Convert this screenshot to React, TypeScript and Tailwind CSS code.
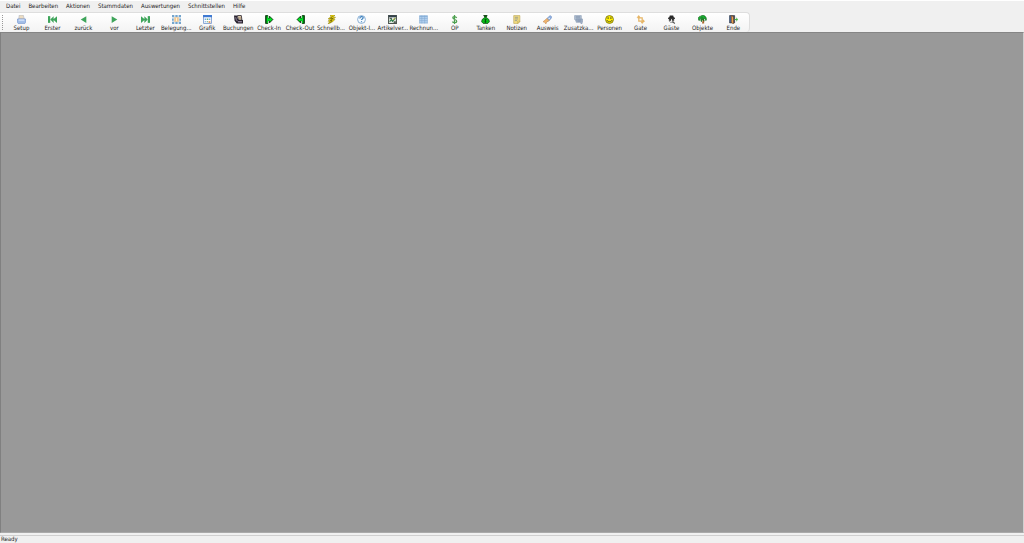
import type { ReactNode } from "react";

interface Tool {
  label: string;
  icon: ReactNode;
}

const MENUS = ["Datei", "Bearbeiten", "Aktionen", "Stammdaten", "Auswertungen", "Schnittstellen", "Hilfe"];

const GREEN = "#3fa55b";

const TOOLS: Tool[] = [
  {
    label: "Setup",
    icon: (
      <>
        <path d="M4 0h7l2 7H3z" fill="#ecdcc2" stroke="#a9b4c4" />
        <path d="M1 7h14l1 6-2 2H2l-2-2z" fill="#a3bfe9" stroke="#6788c4" />
        <path d="M3 9h10" stroke="#e3eeff" strokeWidth="2" />
      </>
    ),
  },
  {
    label: "Erster",
    icon: (
      <>
        <path d="M0 2h4v12H0z" fill={GREEN} />
        <path d="M10 2v12L4 8zM16 2v12L9 8z" fill={GREEN} />
      </>
    ),
  },
  { label: "zurück", icon: <path d="M13 2v12L3 8z" fill={GREEN} /> },
  { label: "vor", icon: <path d="M3 2v12l10-6z" fill={GREEN} /> },
  {
    label: "Letzter",
    icon: (
      <>
        <path d="M12 2h4v12h-4z" fill={GREEN} />
        <path d="M0 2v12l7-6zM6 2v12l6-6z" fill={GREEN} />
      </>
    ),
  },
  {
    label: "Belegung...",
    icon: (
      <>
        <path d="M1 1h14v14H1z" fill="#e4eff8" />
        <path d="M0 0h4v4H0zM6 0h4v4H6zM12 0h4v4h-4zM0 6h3v4H0zM13 6h3v4h-3zM0 12h4v4H0zM6 12h4v4H6zM12 12h4v4h-4z" fill="#75a5cc" />
        <path d="M4 4h8v8H4z" fill="#f3c78f" />
        <path d="M7 5h2v6H7z" fill="#fff0d8" />
      </>
    ),
  },
  {
    label: "Grafik",
    icon: (
      <>
        <path d="M1 1h14v14H1z" fill="#fff" stroke="#6f94cd" strokeWidth="1.5" />
        <path d="M0 0h16v4H0z" fill="#3f7ad2" />
        <path d="M3 6h3v3H3zM10 6h3v3h-3zM3 11h3v2H3z" fill="#79aae2" />
        <path d="M10 11h3v3h-3z" fill="#e48c50" />
        <path d="M7 6h2v3H7zM7 11h2v2H7z" fill="#67b275" />
      </>
    ),
  },
  {
    label: "Buchungen",
    icon: (
      <>
        <path d="M0 1h5l1 4 2 4h8v6H5L1 10z" fill="#2a2430" />
        <path d="M6 1h7l1 8H8z" fill="#f1e4c4" stroke="#2a2430" strokeWidth="1.5" />
        <path d="M8 4h5M9 6h4" stroke="#8a6a50" />
        <path d="M7 12h7" stroke="#a99cb3" strokeWidth="2" />
        <path d="M3 4l1 4 2 3" fill="none" stroke="#a99cb3" strokeWidth="1.5" />
      </>
    ),
  },
  {
    label: "Check-In",
    icon: (
      <>
        <path d="M1 1h4v14H1zM6 6h2V2l6 6-6 6v-4H6z" fill="#063f0a" stroke="#063f0a" strokeWidth="1.5" />
        <path d="M3 2h2v12H3zM5 6h4V4l4 4-4 4v-2H5z" fill="#00e626" />
      </>
    ),
  },
  {
    label: "Check-Out",
    icon: (
      <>
        <path d="M15 1h-4v14h4zM10 6H8V2L2 8l6 6v-4h2z" fill="#063f0a" stroke="#063f0a" strokeWidth="1.5" />
        <path d="M13 2h-2v12h2zM11 6H7V4L3 8l4 4v-2h4z" fill="#00e626" />
      </>
    ),
  },
  {
    label: "Schnellb...",
    icon: (
      <>
        <path d="M6 0h8l-3 4h4l-4 4h3l-4 4-8 4 3-5H2l4-4H2l5-4z" fill="#f3dd12" stroke="#8d7c06" />
        <path d="M10 2L6 6h5l-5 4h3l-4 4" fill="none" stroke="#4b4305" strokeWidth="1.2" />
      </>
    ),
  },
  {
    label: "Objekt-I...",
    icon: (
      <>
        <circle cx="8" cy="8" r="7" fill="#f4faff" stroke="#79a4cc" strokeWidth="1.5" />
        <path d="M5 6c0-4 6-4 6-1 0 2-3 2-3 4M8 11v2" fill="none" stroke="#377cba" strokeWidth="2" />
      </>
    ),
  },
  {
    label: "Artikelver...",
    icon: (
      <>
        <path d="M1 1h14v14H1z" fill="#e0e8e2" stroke="#4a524d" strokeWidth="1.8" />
        <path d="M1 1h14v3H1z" fill="#34414c" />
        <path d="M3 12l3-4 2 3 5-6" fill="none" stroke="#287d46" strokeWidth="2" />
        <path d="M3 5h4v2H3zM10 11h4v3h-4z" fill="#555f58" />
        <path d="M9 9l4-4" stroke="#e1b63c" strokeWidth="1.5" />
      </>
    ),
  },
  {
    label: "Rechnun...",
    icon: (
      <>
        <path d="M1 1h14v14H1z" fill="#b3d1ef" />
        <path d="M1 1h14v2H1z" fill="#7ba6d3" />
        <path d="M1 6h14M1 10h14M1 14h14M1 1v14M5 1v14M10 1v14M15 1v14" stroke="#83aad2" />
      </>
    ),
  },
  {
    label: "OP",
    icon: <path d="M12 5C10 2 5 2 5 5c0 4 7 2 7 6 0 3-5 3-8 1M8 0v16" fill="none" stroke="#4da04f" strokeWidth="2.2" />,
  },
  {
    label: "Tanken",
    icon: (
      <>
        <path d="M5 1h6L9 4l5 4 1 4-3 3H4l-3-3 1-4 5-4z" fill="#08bd18" stroke="#063d0a" strokeWidth="1.2" />
        <path d="M4 0h7L9 4H7z" fill="#1b4c1b" />
        <path d="M10 8c-3-2-4 1-2 2s1 3-2 2M8 7v7" fill="none" stroke="#073c0a" strokeWidth="1.2" />
      </>
    ),
  },
  {
    label: "Notizen",
    icon: (
      <>
        <path d="M3 1h11v11l-3 3H3z" fill="#f2dc80" stroke="#b7a252" />
        <path d="M5 4h6M5 7h6M5 10h4" stroke="#7f8d92" strokeWidth="1.3" />
        <path d="M14 11h-4v4z" fill="#fff3b0" stroke="#b59d46" />
      </>
    ),
  },
  {
    label: "Ausweis",
    icon: (
      <>
        <path d="M8 5l5-4 3 3-5 6-4 1z" fill="#8fb0e2" stroke="#6785b6" />
        <path d="M0 12l7-6 4 4-4 2-2 4-2-3z" fill="#efb36c" stroke="#c48d58" />
        <path d="M10 5l2 2" stroke="#e7f3ff" strokeWidth="2" />
      </>
    ),
  },
  {
    label: "Zusatzka...",
    icon: (
      <>
        <path d="M1 1h12v7H6l-3 3V8H1z" fill="#b4c3d6" stroke="#8799b3" />
        <path d="M4 7h11v6h-1v3l-4-3H4z" fill="#a4b4cb" stroke="#7c8eaa" />
        <path d="M3 3h8M3 5h8M6 9h7M6 11h7" stroke="#7486a1" />
      </>
    ),
  },
  {
    label: "Personen",
    icon: (
      <>
        <circle cx="8" cy="8" r="7" fill="#fff000" stroke="#77710b" strokeWidth="1.5" />
        <path d="M5.500 4v3M10.500 4v3" stroke="#333" strokeWidth="1.6" />
        <path d="M3.500 9c1 4 8 4 9 0" fill="none" stroke="#333" strokeWidth="1.4" />
      </>
    ),
  },
  {
    label: "Gate",
    icon: (
      <>
        <path d="M5 2v9h8M3 5h8v8" fill="none" stroke="#e6b566" strokeWidth="2.2" />
        <path d="M5 0L1 5h7zM16 11l-4-4v7zM8 12l3 4 3-4" fill="#e6b566" />
      </>
    ),
  },
  {
    label: "Gäste",
    icon: (
      <>
        <path d="M5 1h6l1 3 2 1v2H2V5l2-1z" fill="#292929" />
        <path d="M4 7h8v4l-3 2H6l-2-2z" fill="#eee" stroke="#555" />
        <path d="M4 7h3v3H4zM9 7h3v3H9z" fill="#252525" />
        <path d="M9 12l2 1 3 2" fill="none" stroke="#555" strokeWidth="2" />
      </>
    ),
  },
  {
    label: "Objekte",
    icon: (
      <>
        <path d="M7 5c2 3 1 7 0 10h4c0-5-1-8-2-10z" fill="#a7662d" />
        <path d="M8 5C6 4 4 6 2 10c-3-4-1-8 3-8 3-3 10-1 10 6l-1 2c-1-4-2-4-4-4l1 5-3-4-2 5C4 9 5 6 8 5z" fill="#18ae31" stroke="#07500d" />
      </>
    ),
  },
  {
    label: "Ende",
    icon: (
      <>
        <path d="M1 1h9v13H1z" fill="#27416f" stroke="#222" />
        <path d="M4 1l4 2v13l-4-3z" fill="#eea04e" stroke="#66432c" />
        <path d="M2 2v11" stroke="#5c82bb" strokeWidth="1.5" />
        <path d="M10 7h3V4l3 4-3 4V9h-3z" fill="#49b547" />
      </>
    ),
  },
];

function ToolButton({ label, icon }: Tool) {
  return (
    <button type="button" className="flex min-w-0 flex-1 flex-col items-center pt-0.5 hover:bg-[#dce8f5]">
      <svg viewBox="0 0 16 16" className="size-[9px] shrink-0" aria-hidden="true">
        {icon}
      </svg>
      <span className="whitespace-nowrap leading-[7px]">{label}</span>
    </button>
  );
}

export default function App() {
  return (
    <div className="flex h-screen flex-col overflow-hidden bg-[#f0f0f0] font-['DejaVu_Sans_Condensed','DejaVu_Sans',sans-serif] text-[6px] text-[#222]">
      <nav aria-label="Hauptmenü" className="flex h-3 shrink-0 items-start gap-2 border-t border-white px-1.5">
        {MENUS.map((menu) => (
          <button key={menu} type="button" className="leading-[9px] whitespace-nowrap">
            {menu}
          </button>
        ))}
      </nav>

      <div className="flex h-5 shrink-0">
        <div role="toolbar" aria-label="Werkzeuge" className="flex w-[750px] rounded-r-sm border-t border-r border-[#dedede] bg-linear-to-b from-white to-[#f3f3f3]">
          <div className="mx-0.5 my-0.5 w-0.5 border-l border-dotted border-[#999]" />
          {TOOLS.map((tool) => (
            <ToolButton key={tool.label} {...tool} />
          ))}
        </div>
      </div>

      <main className="min-h-0 flex-1 border-t border-r border-b border-l border-t-[#858585] border-r-[#d0d0d0] border-b-[#aaa] border-l-[#808080] bg-[#999]" />

      <footer className="shrink-0 pt-0.5 pb-px">
        <div className="border-t border-[#cfcfcf] px-px leading-[6px]">Ready</div>
      </footer>
    </div>
  );
}
